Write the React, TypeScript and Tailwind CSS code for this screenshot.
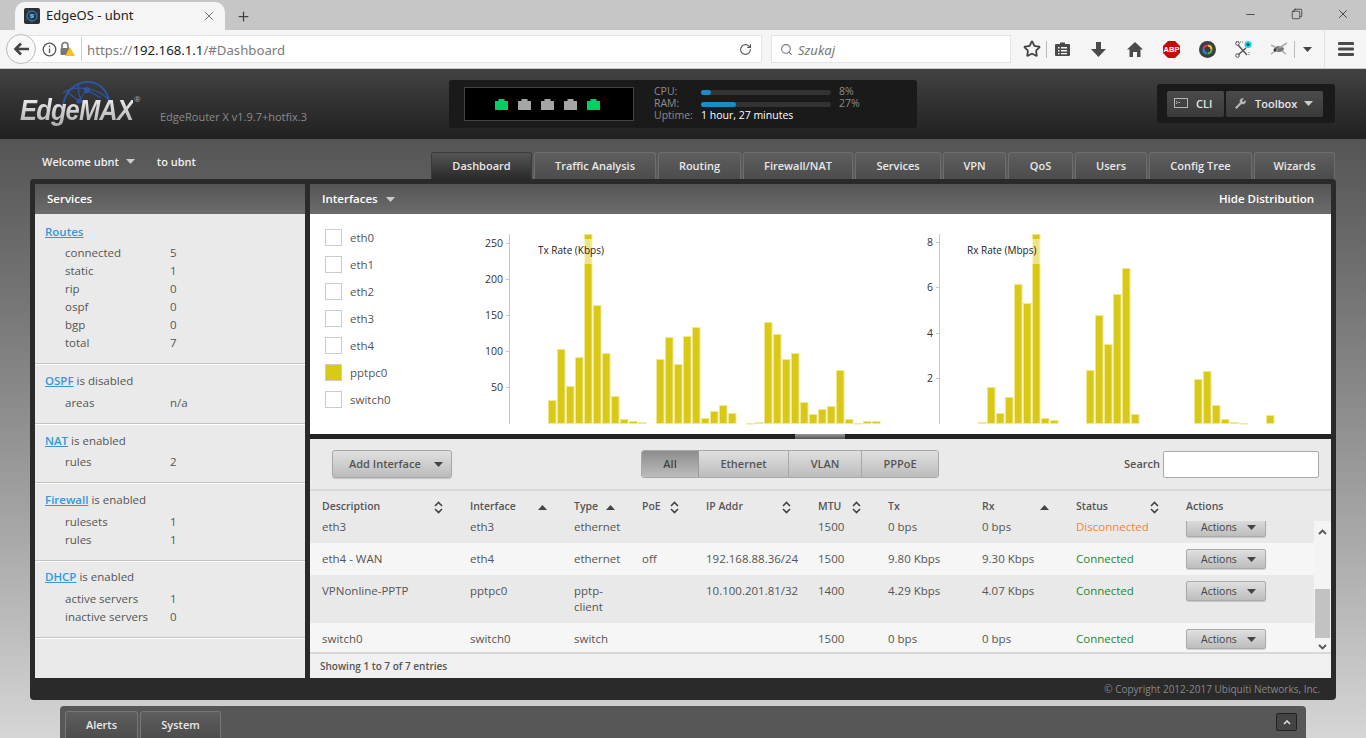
import * as React from "react";
import { Minus, Plus, RotateCw, Search, Square, Star, X } from "lucide-react";

type Row = {
  desc: string;
  iface: string;
  type: React.ReactNode;
  poe: string;
  ip: string;
  mtu: string;
  tx: string;
  rx: string;
  connected: boolean;
  tall?: boolean;
  alt: boolean;
};

const rows: Row[] = [
  { desc: "eth3", iface: "eth3", type: "ethernet", poe: "", ip: "", mtu: "1500", tx: "0 bps", rx: "0 bps", connected: false, alt: true },
  { desc: "eth4 - WAN", iface: "eth4", type: "ethernet", poe: "off", ip: "192.168.88.36/24", mtu: "1500", tx: "9.80 Kbps", rx: "9.30 Kbps", connected: true, alt: false },
  { desc: "VPNonline-PPTP", iface: "pptpc0", type: <>pptp-<br />client</>, poe: "", ip: "10.100.201.81/32", mtu: "1400", tx: "4.29 Kbps", rx: "4.07 Kbps", connected: true, tall: true, alt: true },
  { desc: "switch0", iface: "switch0", type: "switch", poe: "", ip: "", mtu: "1500", tx: "0 bps", rx: "0 bps", connected: true, alt: false },
];

const services = [
  { link: "Routes", rest: "", pt: "pt-[9px]", mb: "mb-[3px]", items: [["connected", "5"], ["static", "1"], ["rip", "0"], ["ospf", "0"], ["bgp", "0"], ["total", "7"]] },
  { link: "OSPF", rest: " is disabled", pt: "pt-[8px]", mb: "mb-[4px]", items: [["areas", "n/a"]] },
  { link: "NAT", rest: " is enabled", pt: "pt-[8px]", mb: "mb-[3px]", items: [["rules", "2"]] },
  { link: "Firewall", rest: " is enabled", pt: "pt-[8px]", mb: "mb-[4px]", items: [["rulesets", "1"], ["rules", "1"]] },
  { link: "DHCP", rest: " is enabled", pt: "pt-[7px]", mb: "mb-[4px]", items: [["active servers", "1"], ["inactive servers", "0"]] },
];

const tabs = [
  ["Dashboard", "w-[101px]"],
  ["Traffic Analysis", "w-[122px]"],
  ["Routing", "w-[83px]"],
  ["Firewall/NAT", "w-[110px]"],
  ["Services", "w-[86px]"],
  ["VPN", "w-[63px]"],
  ["QoS", "w-[65px]"],
  ["Users", "w-[72px]"],
  ["Config Tree", "w-[103px]"],
  ["Wizards", "w-[81px]"],
];

// bar tops in page pixels, baseline is 424
const txBars: [number, number[]][] = [
  [548, [400, 349, 386, 357, 234, 305, 353, 396, 419, 421, 422]],
  [656, [359, 337, 364, 336, 327, 418, 411, 405, 413]],
  [746, [423, 422, 322, 334, 359, 353, 402, 414, 409, 406, 370, 419, 423, 421, 421]],
];
const rxBars: [number, number[]][] = [
  [978, [422, 387, 413, 397, 284, 303, 234, 418, 420]],
  [1086, [370, 315, 344, 294, 268, 414]],
  [1194, [379, 371, 405, 419, 422, 423]],
  [1266, [415]],
];

function Caret({ className = "fill-[#444]" }: { className?: string }) {
  return (
    <svg width="9" height="5" viewBox="0 0 9 5" className={className}>
      <path d="M0 0h9L4.5 5z" />
    </svg>
  );
}

function SortBoth() {
  return (
    <svg width="9" height="13" viewBox="0 0 9 13" fill="none" stroke="#444" strokeWidth="1.6">
      <path d="M1 5l3.5-3.5L8 5M1 8l3.5 3.5L8 8" />
    </svg>
  );
}

function SortUp() {
  return (
    <svg width="9" height="5" viewBox="0 0 9 5" fill="#444">
      <path d="M0 5h9L4.5 0z" />
    </svg>
  );
}

function Chart({ x0, width, axisX, title, titleX, ticks, bars, peakX }: {
  x0: number;
  width: number;
  axisX: number;
  title: string;
  titleX: number;
  ticks: [string, number][];
  bars: [number, number[]][];
  peakX: number;
}) {
  return (
    <svg width={width} height="220" viewBox={`${x0} 214 ${width} 220`} className="shrink-0">
      <path d={`M${axisX + 0.5} 234V424`} stroke="#c8c8c8" />
      {ticks.map(([label, y]) => (
        <g key={label}>
          <path d={`M${axisX - 3} ${y + 0.5}H${axisX}`} stroke="#c8c8c8" />
          <text x={axisX - 6} y={y + 4} textAnchor="end" fontSize="10.5" fill="#333">{label}</text>
        </g>
      ))}
      {bars.map(([start, tops]) =>
        tops.map((top, i) => (
          <rect
            key={`${start}-${i}`}
            x={start + i * 9 + 0.5}
            y={top + 0.5}
            width="7.5"
            height={Math.max(424 - top - 1, 0.5)}
            fill="#d9c816"
            stroke="#efe88f"
          />
        ))
      )}
      <rect x={peakX} y="239" width="9" height="25" fill="#fff" fillOpacity="0.5" />
      <text x={titleX} y="254" fontSize="10" fill="#222">{title}</text>
    </svg>
  );
}

function ActionsButton() {
  return (
    <button className="flex h-[20px] w-[80px] items-center justify-between rounded-[2px] border border-[#aaa] bg-linear-to-b from-[#e0e0e0] to-[#bdbdbd] pl-[14px] pr-[9px] text-[10.5px] text-[#444] shadow-[0_1px_1px_rgba(0,0,0,0.15)]">
      Actions
      <Caret />
    </button>
  );
}

function BrowserChrome() {
  return (
    <div className="font-['Noto_Sans',sans-serif]">
      <div className="flex h-[30px] items-end bg-[#c6c6c6]">
        <div className="ml-[15px] flex h-[28px] w-[210px] items-center rounded-t-[10px] bg-[#f5f5f5] pl-[9px] pr-[9px]">
          <svg width="16" height="16" viewBox="0 0 16 16" className="shrink-0">
            <rect width="16" height="16" rx="2" fill="#2a2f36" />
            <circle cx="8" cy="8" r="5" fill="none" stroke="#3f8fd0" />
            <circle cx="8" cy="8" r="2.2" fill="#52b2ec" />
            <path d="M1 12L15 4M4 1l4 14" stroke="#2a6da5" strokeWidth="0.7" />
          </svg>
          <span className="ml-[6px] text-[13px] text-[#222]">EdgeOS - ubnt</span>
          <X className="ml-auto text-[#555]" size={14} strokeWidth={1.4} />
        </div>
        <Plus className="mb-[6px] ml-[11px] text-[#444]" size={15} strokeWidth={2} />
        <div className="ml-auto flex w-[122px] items-center justify-between self-start pt-[7px] pr-[16px] text-[#111]">
          <Minus size={13} strokeWidth={1.2} />
          <span className="relative block h-[12px] w-[12px]">
            <Square size={10} strokeWidth={1.5} className="absolute right-0 top-0" />
            <Square size={10} strokeWidth={1.5} className="absolute bottom-0 left-0 fill-[#c6c6c6]" />
          </span>
          <X size={14} strokeWidth={1.2} />
        </div>
      </div>
      <div className="flex h-[39px] items-center border-b border-[#c8c8c8] bg-[#f5f5f5] pl-[6px] text-[#4a4a4a]">
        <div className="flex h-[28px] w-[756px] items-center rounded-l-full border border-[#e4e4e4] bg-white">
          <div className="-ml-px flex h-[30px] w-[30px] shrink-0 items-center justify-center rounded-full border border-[#bbb] bg-[#f8f8f8]">
            <svg width="16" height="14" viewBox="0 0 16 14" fill="none" stroke="#444" strokeWidth="2.6">
              <path d="M16 7H3M8 1.5L2.5 7 8 12.5" />
            </svg>
          </div>
          <svg width="15" height="15" viewBox="0 0 15 15" className="ml-[6px] shrink-0" fill="none" stroke="#555" strokeWidth="1.3">
            <circle cx="7.5" cy="7.5" r="6.3" />
            <path d="M7.5 6.5v4.5M7.5 3.6v1.6" />
          </svg>
          <svg width="16" height="16" viewBox="0 0 16 16" className="ml-[2px] shrink-0">
            <path d="M3 7V4.5a3 3 0 016 0V7" fill="none" stroke="#777" strokeWidth="1.6" />
            <rect x="1.5" y="7" width="9" height="7" rx="1" fill="#777" />
            <path d="M11 6l5 9H6z" fill="#f7c022" />
          </svg>
          <span className="ml-[6px] h-[24px] w-px bg-[#ccc]" />
          <span className="ml-[5px] mt-[3px] text-[13.2px] text-[#7b7b7b]">
            https://<span className="text-[#222]">192.168.1.1</span>/#Dashboard
          </span>
          <RotateCw size={13} strokeWidth={2} className="ml-auto mr-[9px] text-[#555]" />
        </div>
        <div className="ml-[9px] flex h-[28px] w-[240px] items-center border border-[#e4e4e4] bg-white pl-[8px]">
          <Search size={13} strokeWidth={2} className="text-[#777]" />
          <span className="ml-[5px] mt-[3px] text-[13px] italic text-[#777]">Szukaj</span>
        </div>
        <div className="flex w-[30px] justify-end">
          <Star size={18} strokeWidth={2.4} className="text-[#444]" />
        </div>
        <span className="ml-[5px] h-[17px] w-px bg-[#bbb]" />
        <svg width="15" height="16" viewBox="0 0 15 16" className="ml-[8px]" fill="#4a4a4a">
          <path d="M1 3h4V1.5h5V3h4a1 1 0 011 1v10a1 1 0 01-1 1H1a1 1 0 01-1-1V4a1 1 0 011-1z" />
          <path d="M3 6h1.5v1.5H3zM6 6h6v1.5H6zM3 9h1.5v1.5H3zM6 9h6v1.5H6zM3 12h1.5v1.2H3zM6 12h6v1.2H6z" fill="#f5f5f5" />
        </svg>
        <svg width="15" height="15" viewBox="0 0 15 15" className="ml-[21px]" fill="#4a4a4a">
          <path d="M5 0h5v7h5l-7.5 8L0 7h5z" />
        </svg>
        <svg width="16" height="15" viewBox="0 0 16 15" className="ml-[21px]" fill="#4a4a4a">
          <path d="M8 0l8 7.5h-2.5V15h-3.5v-5H6v5H2.500V7.500H0z" />
        </svg>
        <svg width="17" height="17" viewBox="0 0 17 17" className="ml-[20px]">
          <path d="M5 0h7l5 5v7l-5 5H5l-5-5V5z" fill="#c30b0b" />
          <text x="8.500" y="11.200" textAnchor="middle" fontSize="7.500" fontWeight="700" fill="#fff" fontFamily="Liberation Sans">ABP</text>
        </svg>
        <svg width="17" height="17" viewBox="0 0 17 17" className="ml-[19px]">
          <circle cx="8.500" cy="8.500" r="8.500" fill="#3a3d42" />
          <circle cx="8.500" cy="8.500" r="4" fill="none" stroke="#49c23c" strokeWidth="2" strokeDasharray="6 19" />
          <circle cx="8.500" cy="8.500" r="4" fill="none" stroke="#e8c520" strokeWidth="2" strokeDasharray="6 19" strokeDashoffset="6" />
          <circle cx="8.500" cy="8.500" r="4" fill="none" stroke="#e0385c" strokeWidth="2" strokeDasharray="6 19" strokeDashoffset="12" />
          <circle cx="8.500" cy="8.500" r="4" fill="none" stroke="#2a8be0" strokeWidth="2" strokeDasharray="6 19" strokeDashoffset="18" />
        </svg>
        <svg width="17" height="17" viewBox="0 0 17 17" className="ml-[19px]">
          <path d="M3 4l9 10M11 7l-8 7" stroke="#555" strokeWidth="1.400" />
          <circle cx="2.500" cy="2.500" r="1.800" fill="none" stroke="#555" />
          <circle cx="2.500" cy="14.500" r="1.800" fill="none" stroke="#555" />
          <path d="M1 1h8" stroke="#555" strokeDasharray="1 1" />
          <path d="M14 11v4" stroke="#555" strokeDasharray="1 1" />
          <circle cx="13" cy="3.500" r="3.500" fill="#12d6e6" />
          <circle cx="13" cy="3.500" r="1.500" fill="#0b4a7a" />
        </svg>
        <svg width="18" height="14" viewBox="0 0 18 14" className="ml-[18px]">
          <ellipse cx="9" cy="7" rx="5" ry="3" fill="#777" />
          <path d="M9 6l8-5M8 7L1 12M5 5L1 3M12 9l4 3" stroke="#aaa" strokeWidth="1.500" />
          <circle cx="5" cy="8" r="1.500" fill="#333" />
        </svg>
        <span className="ml-[6px] h-[17px] w-px bg-[#bbb]" />
        <Caret className="ml-[8px] fill-[#444]" />
        <span className="ml-[12px] h-[38px] w-px bg-[#e2e2e2]" />
        <svg width="16" height="14" viewBox="0 0 16 14" className="ml-[13px]" fill="#4a4a4a">
          <rect width="16" height="3" rx="1" />
          <rect y="5.500" width="16" height="3" rx="1" />
          <rect y="11" width="16" height="3" rx="1" />
        </svg>
      </div>
    </div>
  );
}

function Port({ on }: { on: boolean }) {
  return (
    <svg width="13" height="11" viewBox="0 0 13 11" className={on ? "fill-[#00d061]" : "fill-[#a5a5a5]"}>
      <path d="M0 2h3.500V0h6v2H13v9H0z" />
    </svg>
  );
}

function Meter({ label, pct, fill }: { label: string; pct: string; fill: string }) {
  return (
    <div className="flex h-[12px] items-center">
      <span className="w-[47px] text-[#8c8c8c]">{label}</span>
      <div className="h-[5px] w-[130px] rounded-full bg-[#333]">
        <div className={`h-[5px] rounded-full bg-[#1a8bc6] ${fill}`} />
      </div>
      <span className="ml-[8px] text-[#8c8c8c]">{pct}</span>
    </div>
  );
}

function Header() {
  return (
    <div className="flex h-[70px] items-start bg-linear-to-b from-[#424242] to-[#212121]">
      <div className="relative ml-[20px] mt-[21px] w-[140px] shrink-0">
        <svg width="50" height="24" viewBox="0 0 50 24" fill="none" stroke="#2f55a5" strokeWidth="1.200" className="absolute left-[41px] -top-[9px]">
          <path d="M2 24C5 8 16 1 27 1s19 8 21 19" strokeWidth="2" />
          <path d="M2 12C12 4 36 6 47 18M18 2c-2 8 0 14 4 20M26 9l14 8M26 9l-8 10M6 11l12 9" />
          <circle cx="26" cy="9" r="2.500" fill="#2f55a5" />
          <circle cx="18" cy="20" r="2" fill="#2f55a5" />
        </svg>
        <span className="relative inline-block origin-left scale-x-[0.85] bg-linear-to-b from-white to-[#a5a5a5] bg-clip-text font-['Liberation_Sans',sans-serif] text-[30px] font-bold italic leading-[40px] tracking-[-1px] text-transparent">EdgeMAX</span>
        <span className="absolute left-[114px] top-[3px] text-[8px] text-[#aaa]">®</span>
      </div>
      <div className="mt-[40px] w-[289px] shrink-0 text-[11px] text-[#8a8a8a]">EdgeRouter X v1.9.7+hotfix.3</div>
      <div className="mt-[11px] flex h-[48px] w-[468px] shrink-0 items-center rounded-[3px] bg-[#1a1a1a] pl-[15px] text-[10.5px]">
        <div className="flex h-[34px] w-[170px] items-center justify-center gap-[10px] border border-[#444] bg-black pr-[3px]">
          <Port on />
          <Port on={false} />
          <Port on={false} />
          <Port on={false} />
          <Port on />
        </div>
        <div className="ml-[20px] flex w-[220px] flex-col">
          <Meter label="CPU:" pct="8%" fill="w-[8%]" />
          <Meter label="RAM:" pct="27%" fill="w-[27%]" />
          <div className="flex h-[12px] items-center">
            <span className="w-[47px] text-[#8c8c8c]">Uptime:</span>
            <span className="text-white">1 hour, 27 minutes</span>
          </div>
        </div>
      </div>
      <div className="ml-[240px] mt-[15px] flex h-[39px] w-[178px] items-center gap-[2px] rounded-[3px] bg-[#1a1a1a] pl-[10px] text-[11px] font-semibold leading-[28px] text-[#e6e6e6]">
        <div className="flex h-[26px] w-[57px] items-center rounded-[2px] bg-linear-to-b from-[#4b4b4b] to-[#3a3a3a] pl-[7px]">
          <svg width="14" height="11" viewBox="0 0 14 11" fill="none" stroke="#b5b5b5">
            <rect x="0.500" y="0.500" width="13" height="9" />
            <path d="M2 3l1.500 1.500L2 6M4.500 4.500H6" />
          </svg>
          <span className="ml-[8px]">CLI</span>
        </div>
        <div className="flex h-[26px] w-[97px] items-center rounded-[2px] bg-linear-to-b from-[#4b4b4b] to-[#3a3a3a] pl-[9px]">
          <svg width="11" height="11" viewBox="0 0 11 11" fill="#b5b5b5">
            <path d="M0 9.500L5 4.500a3 3 0 014-4L7 2.500l1.500 1.500 2-2a3 3 0 01-4 4L1.500 11z" />
          </svg>
          <span className="ml-[9px]">Toolbox</span>
          <Caret className="ml-[7px] fill-[#ccc]" />
        </div>
      </div>
    </div>
  );
}

function NavRow() {
  return (
    <div className="flex h-[40px] items-end pl-[42px]">
      <div className="mb-[9px] flex w-[389px] items-center text-[11px] font-semibold text-[#f0f0f0]">
        Welcome ubnt
        <Caret className="ml-[7px] fill-[#ccc]" />
        <span className="ml-[22px]">to ubnt</span>
      </div>
      <div className="flex gap-[2px]">
        {tabs.map(([name, width], i) => (
          <div
            key={name}
            className={`flex h-[27px] items-center justify-center rounded-t-[3px] border border-b-0 text-[11px] font-semibold text-[#e8e8e8] ${width} ${
              i === 0 ? "border-[#3a3a3a] bg-linear-to-b from-[#555] to-[#2a2a2a]" : "border-[#6e6e6e] bg-linear-to-b from-[#5e5e5e] to-[#4c4c4c]"
            }`}
          >
            {name}
          </div>
        ))}
      </div>
    </div>
  );
}

function ServicesPanel() {
  return (
    <div className="flex w-[270px] shrink-0 flex-col bg-[#eaeaea]">
      <div className="flex h-[30px] items-center bg-linear-to-b from-[#555] to-[#6c6c6c] pl-[12px] text-[11.5px] font-semibold text-white">Services</div>
      {services.map((s) => (
        <div key={s.link} className={`border-b border-[#c4c4c4] pb-[11px] pl-[10px] text-[11.5px] leading-[18px] text-[#555] shadow-[0_1px_0_#fff] ${s.pt}`}>
          <div className={s.mb}>
            <a className="font-semibold text-[#3498d8] underline">{s.link}</a>
            {s.rest}
          </div>
          {s.items.map(([name, val]) => (
            <div key={name} className="flex pl-[20px]">
              <span className="w-[105px]">{name}</span>
              <span>{val}</span>
            </div>
          ))}
        </div>
      ))}
    </div>
  );
}

function ChartsArea() {
  const names = ["eth0", "eth1", "eth2", "eth3", "eth4", "pptpc0", "switch0"];
  return (
    <div className="flex h-[220px] bg-white">
      <div className="flex w-[150px] shrink-0 flex-col gap-[10px] pl-[15px] pt-[15px]">
        {names.map((n) => (
          <div key={n} className="flex h-[17px] items-center text-[11.5px] leading-[16px] text-[#555]">
            <span className={`h-[17px] w-[17px] border border-[#ccc] ${n === "pptpc0" ? "bg-[#d9c816]" : "bg-white"}`} />
            <span className="ml-[8px]">{n}</span>
          </div>
        ))}
      </div>
      <Chart
        x0={460}
        width={440}
        axisX={509}
        title="Tx Rate (Kbps)"
        titleX={538}
        ticks={[["250", 243], ["200", 279], ["150", 315], ["100", 351], ["50", 387]]}
        bars={txBars}
        peakX={584}
      />
      <Chart
        x0={900}
        width={431}
        axisX={939}
        title="Rx Rate (Mbps)"
        titleX={967}
        ticks={[["8", 242], ["6", 287], ["4", 333], ["2", 378]]}
        bars={rxBars}
        peakX={1032}
      />
    </div>
  );
}

const gridCols = "grid grid-cols-[148px_104px_68px_64px_112px_70px_94px_94px_110px_1fr]";

function HeadCell({ name, sort }: { name: string; sort?: "both" | "up" }) {
  return (
    <div className="flex items-center justify-between pr-[27px]">
      {name}
      {sort === "both" ? <SortBoth /> : sort === "up" ? <SortUp /> : null}
    </div>
  );
}

function InterfacesPanel() {
  return (
    <div className="flex min-w-0 flex-1 flex-col">
      <div className="flex h-[30px] items-center justify-between bg-linear-to-b from-[#555] to-[#6c6c6c] pl-[12px] pr-[17px] text-[11.5px] font-semibold text-white">
        <span className="flex items-center">
          Interfaces
          <Caret className="ml-[8px] fill-[#ccc]" />
        </span>
        <span>Hide Distribution</span>
      </div>
      <ChartsArea />
      <div className="relative h-[5px] shrink-0 bg-[#222]">
        <div className="absolute left-[485px] top-0 h-[5px] w-[50px] bg-linear-to-b from-[#999] to-[#555]" />
      </div>
      <div className="flex min-h-0 flex-1 flex-col bg-[#eaeaea] text-[11.5px] text-[#555]">
        <div className="flex h-[52px] shrink-0 items-center border-b-2 border-[#d8d8d8] pl-[22px] pr-[12px] text-[11px]">
          <button className="flex h-[28px] w-[120px] items-center rounded-[3px] border border-[#a8a8a8] bg-linear-to-b from-[#e0e0e0] to-[#bcbcbc] pl-[16px] font-semibold text-[#555] shadow-[0_1px_1px_rgba(0,0,0,0.15)]">
            Add Interface
            <Caret className="ml-[13px] fill-[#444]" />
          </button>
          <div className="ml-[189px] flex h-[28px] w-[298px] overflow-hidden rounded-[3px] border border-[#a8a8a8] font-semibold">
            <div className="flex w-[57px] items-center justify-center border-r border-[#999] bg-linear-to-b from-[#8d8d8d] to-[#bdbdbd] text-[#444]">All</div>
            <div className="flex w-[90px] items-center justify-center border-r border-[#a8a8a8] bg-linear-to-b from-[#e0e0e0] to-[#bcbcbc]">Ethernet</div>
            <div className="flex w-[73px] items-center justify-center border-r border-[#a8a8a8] bg-linear-to-b from-[#e0e0e0] to-[#bcbcbc]">VLAN</div>
            <div className="flex flex-1 items-center justify-center bg-linear-to-b from-[#e0e0e0] to-[#bcbcbc]">PPPoE</div>
          </div>
          <span className="ml-auto font-semibold">Search</span>
          <div className="ml-[3px] h-[27px] w-[156px] rounded-[2px] border border-[#aaa] bg-white" />
        </div>
        <div className={`${gridCols} h-[30px] shrink-0 items-center pl-[12px] pt-[2px] text-[10.5px] font-semibold`}>
          <HeadCell name="Description" sort="both" />
          <HeadCell name="Interface" sort="up" />
          <HeadCell name="Type" sort="up" />
          <HeadCell name="PoE" sort="both" />
          <HeadCell name="IP Addr" sort="both" />
          <HeadCell name="MTU" sort="both" />
          <HeadCell name="Tx" />
          <HeadCell name="Rx" sort="up" />
          <HeadCell name="Status" sort="both" />
          <HeadCell name="Actions" />
        </div>
        <div className="flex h-[133px] shrink-0 overflow-hidden border-b-2 border-[#d8d8d8]">
          <div className="min-w-0 flex-1">
            <div className="-mt-[10px]">
              {rows.map((r) => (
                <div key={r.desc} className={`${gridCols} items-start pl-[12px] pt-[8px] leading-[16px] ${r.tall ? "h-[48px]" : "h-[32px]"} ${r.alt ? "bg-[#e9e9e9]" : "bg-[#f6f6f6]"}`}>
                  <span>{r.desc}</span>
                  <span>{r.iface}</span>
                  <span>{r.type}</span>
                  <span>{r.poe}</span>
                  <span>{r.ip}</span>
                  <span>{r.mtu}</span>
                  <span>{r.tx}</span>
                  <span>{r.rx}</span>
                  <span className={r.connected ? "text-[#1c8a2e]" : "text-[#f0843c]"}>{r.connected ? "Connected" : "Disconnected"}</span>
                  <div className="-mt-[2px]"><ActionsButton /></div>
                </div>
              ))}
            </div>
          </div>
          <div className="flex w-[17px] shrink-0 flex-col items-center bg-[#f4f4f4]">
            <svg width="9" height="6" viewBox="0 0 9 6" fill="none" stroke="#555" strokeWidth="1.800" className="mt-[8px] shrink-0">
              <path d="M1 5l3.500-3.500L8 5" />
            </svg>
            <div className="mt-[54px] h-[49px] w-[15px] shrink-0 bg-[#c2c2c2]" />
            <svg width="9" height="6" viewBox="0 0 9 6" fill="none" stroke="#555" strokeWidth="1.800" className="mt-[6px] shrink-0">
              <path d="M1 1l3.500 3.500L8 1" />
            </svg>
          </div>
        </div>
        <div className="flex flex-1 items-center bg-[#f0f0f0] pl-[10px] text-[10px] font-semibold">Showing 1 to 7 of 7 entries</div>
      </div>
    </div>
  );
}

export default function App() {
  return (
    <div className="flex h-[738px] w-[1366px] flex-col overflow-hidden font-['Open_Sans',sans-serif]">
      <BrowserChrome />
      <Header />
      <div className="flex min-h-0 flex-1 flex-col bg-linear-to-b from-[#555] to-[#d6d6d6]">
        <NavRow />
        <div className="ml-[30px] flex h-[521px] w-[1306px] shrink-0 flex-col rounded-[4px] bg-[#2a2a2a] px-[5px] pt-[5px]">
          <div className="flex h-[494px] shrink-0 gap-[5px]">
            <ServicesPanel />
            <InterfacesPanel />
          </div>
          <div className="flex flex-1 items-center justify-end pr-[11px] text-[10px] text-[#888]">© Copyright 2012-2017 Ubiquiti Networks, Inc.</div>
        </div>
        <div className="ml-[60px] mt-[6px] flex h-[32px] w-[1246px] shrink-0 items-end rounded-t-[4px] bg-[#575757] pl-[5px]">
          <div className="flex h-[27px] w-[73px] items-center justify-center rounded-t-[3px] border border-b-0 border-[#777] bg-linear-to-b from-[#5e5e5e] to-[#4c4c4c] text-[11px] font-semibold text-[#e8e8e8]">Alerts</div>
          <div className="ml-[2px] flex h-[27px] w-[81px] items-center justify-center rounded-t-[3px] border border-b-0 border-[#777] bg-linear-to-b from-[#5e5e5e] to-[#4c4c4c] text-[11px] font-semibold text-[#e8e8e8]">System</div>
          <div className="mb-[7px] ml-auto mr-[9px] flex h-[18px] w-[21px] items-center justify-center rounded-[2px] border border-[#222] bg-[#444]">
            <svg width="8" height="5" viewBox="0 0 8 5" fill="none" stroke="#ddd" strokeWidth="1.600">
              <path d="M1 4l3-3 3 3" />
            </svg>
          </div>
        </div>
      </div>
    </div>
  );
}
